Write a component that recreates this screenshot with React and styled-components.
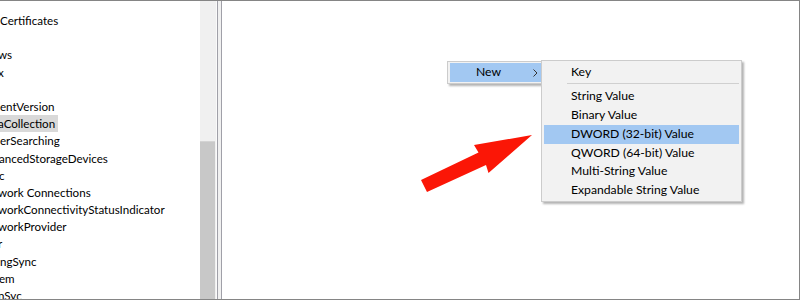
import React from "react";
import styled, { createGlobalStyle } from "styled-components";

const Global = createGlobalStyle`
  html, body { margin: 0; padding: 0; background: #fff; }
  body { font-family: Lato, "Open Sans", "Noto Sans", sans-serif; }
`;

const treeRows = [
  { text: "Certificates" },
  { text: "" },
  { text: "ws", cut: 2 },
  { text: "x", cut: 2 },
  { text: "" },
  { text: "entVersion" },
  { text: "aCollection", cut: 2, selected: true },
  { text: "erSearching" },
  { text: "ancedStorageDevices", cut: 1 },
  { text: "c", cut: 1 },
  { text: "work Connections", cut: 2 },
  { text: "workConnectivityStatusIndicator", cut: 2 },
  { text: "workProvider", cut: 2 },
  { text: "r", cut: 2 },
  { text: "ngSync" },
  { text: "em", cut: 1 },
  { text: "nSyc", cut: 2 },
];

const subItems = [
  "String Value",
  "Binary Value",
  "DWORD (32-bit) Value",
  "QWORD (64-bit) Value",
  "Multi-String Value",
  "Expandable String Value",
];

export default function App() {
  return (
    <>
      <Global />
      <Frame>
        <TreePane>
          {treeRows.map((r, i) => (
            <TreeRow key={i}>
              <TreeLabel $selected={r.selected} $cut={r.cut || 0}>
                {r.text}
              </TreeLabel>
            </TreeRow>
          ))}
        </TreePane>
        <ScrollTrack>
          <ScrollThumb />
        </ScrollTrack>
        <Splitter />
        <ValuePane />

        <ParentMenu>
          <MenuItem $active $pad={26}>
            New
            <Chevron viewBox="0 0 5 8">
              <polyline points="0.5,0.5 4,4 0.5,7.5" fill="none" stroke="#333" strokeWidth="1" />
            </Chevron>
          </MenuItem>
        </ParentMenu>

        <SubMenu>
          <MenuItem $pad={27}>Key</MenuItem>
          <Separator />
          {subItems.map((t) => (
            <MenuItem key={t} $pad={27} $active={t.startsWith("DWORD")}>
              {t}
            </MenuItem>
          ))}
        </SubMenu>

        <Arrow viewBox="0 0 800 300">
          <polygon
            points="532,135 474,145 478.5,152.5 421,180 427,192 486,165 488.5,173"
            fill="#fb1606"
          />
        </Arrow>
      </Frame>
    </>
  );
}

const Frame = styled.div`
  position: relative;
  box-sizing: border-box;
  width: 800px;
  height: 300px;
  border-top: 1px solid #858585;
  border-right: 1px solid #858585;
  border-bottom: 1px solid #858585;
  display: flex;
  overflow: hidden;
`;

const TreePane = styled.div`
  width: 200px;
  flex: none;
  overflow: hidden;
  padding-top: 11px;
  font-size: 11.6px;
  color: #000;
`;

const TreeRow = styled.div`
  height: 17.2px;
  line-height: 17.2px;
  white-space: nowrap;
`;

const TreeLabel = styled.span`
  display: inline-block;
  margin-left: ${(p) => -p.$cut}px;
  padding-right: 3px;
  background: ${(p) => (p.$selected ? "#d9d9d9" : "transparent")};
`;

const ScrollTrack = styled.div`
  width: 16px;
  flex: none;
  background: #f0f0f0;
  display: flex;
  flex-direction: column;
  justify-content: flex-end;
  border-right: 1px solid #fafafa;
`;

const ScrollThumb = styled.div`
  height: 157px;
  margin: 0 1px 0 0;
  background: #c8c8c8;
  border-top: 1px solid #d4d4d4;
`;

const Splitter = styled.div`
  width: 3px;
  flex: none;
  background: #f0f0f0;
  border-left: 1px solid #a0a0a8;
  border-right: 1px solid #a0a0a8;
`;

const ValuePane = styled.div`
  flex: 1;
  background: #fff;
`;

const ParentMenu = styled.div`
  position: absolute;
  left: 447px;
  top: 60px;
  width: 100px;
  padding: 1px 1px 1px 2px;
  background: #f2f2f2;
  border: 1px solid #cccccc;
  box-shadow: 2px 2px 2px rgba(0, 0, 0, 0.3);
  font-size: 12.2px;
`;

const SubMenu = styled.div`
  position: absolute;
  left: 541px;
  top: 59px;
  width: 195px;
  padding: 2px 2px 1px 2px;
  background: #f2f2f2;
  border: 1px solid #cccccc;
  box-shadow: 2px 2px 2px rgba(0, 0, 0, 0.3);
  font-size: 12.2px;
`;

const MenuItem = styled.div`
  position: relative;
  height: 18.75px;
  line-height: 18.75px;
  padding-left: ${(p) => p.$pad}px;
  color: #000;
  white-space: nowrap;
  background: ${(p) => (p.$active ? "#a2c8f2" : "transparent")};
`;

const Chevron = styled.svg`
  position: absolute;
  left: 83px;
  top: 6px;
  width: 5px;
  height: 8px;
`;

const Separator = styled.div`
  height: 1px;
  margin: 1.5px 0 3px 23px;
  background: #d0d0d0;
`;

const Arrow = styled.svg`
  position: absolute;
  left: 0;
  top: -1px;
  width: 800px;
  height: 300px;
  pointer-events: none;
`;
